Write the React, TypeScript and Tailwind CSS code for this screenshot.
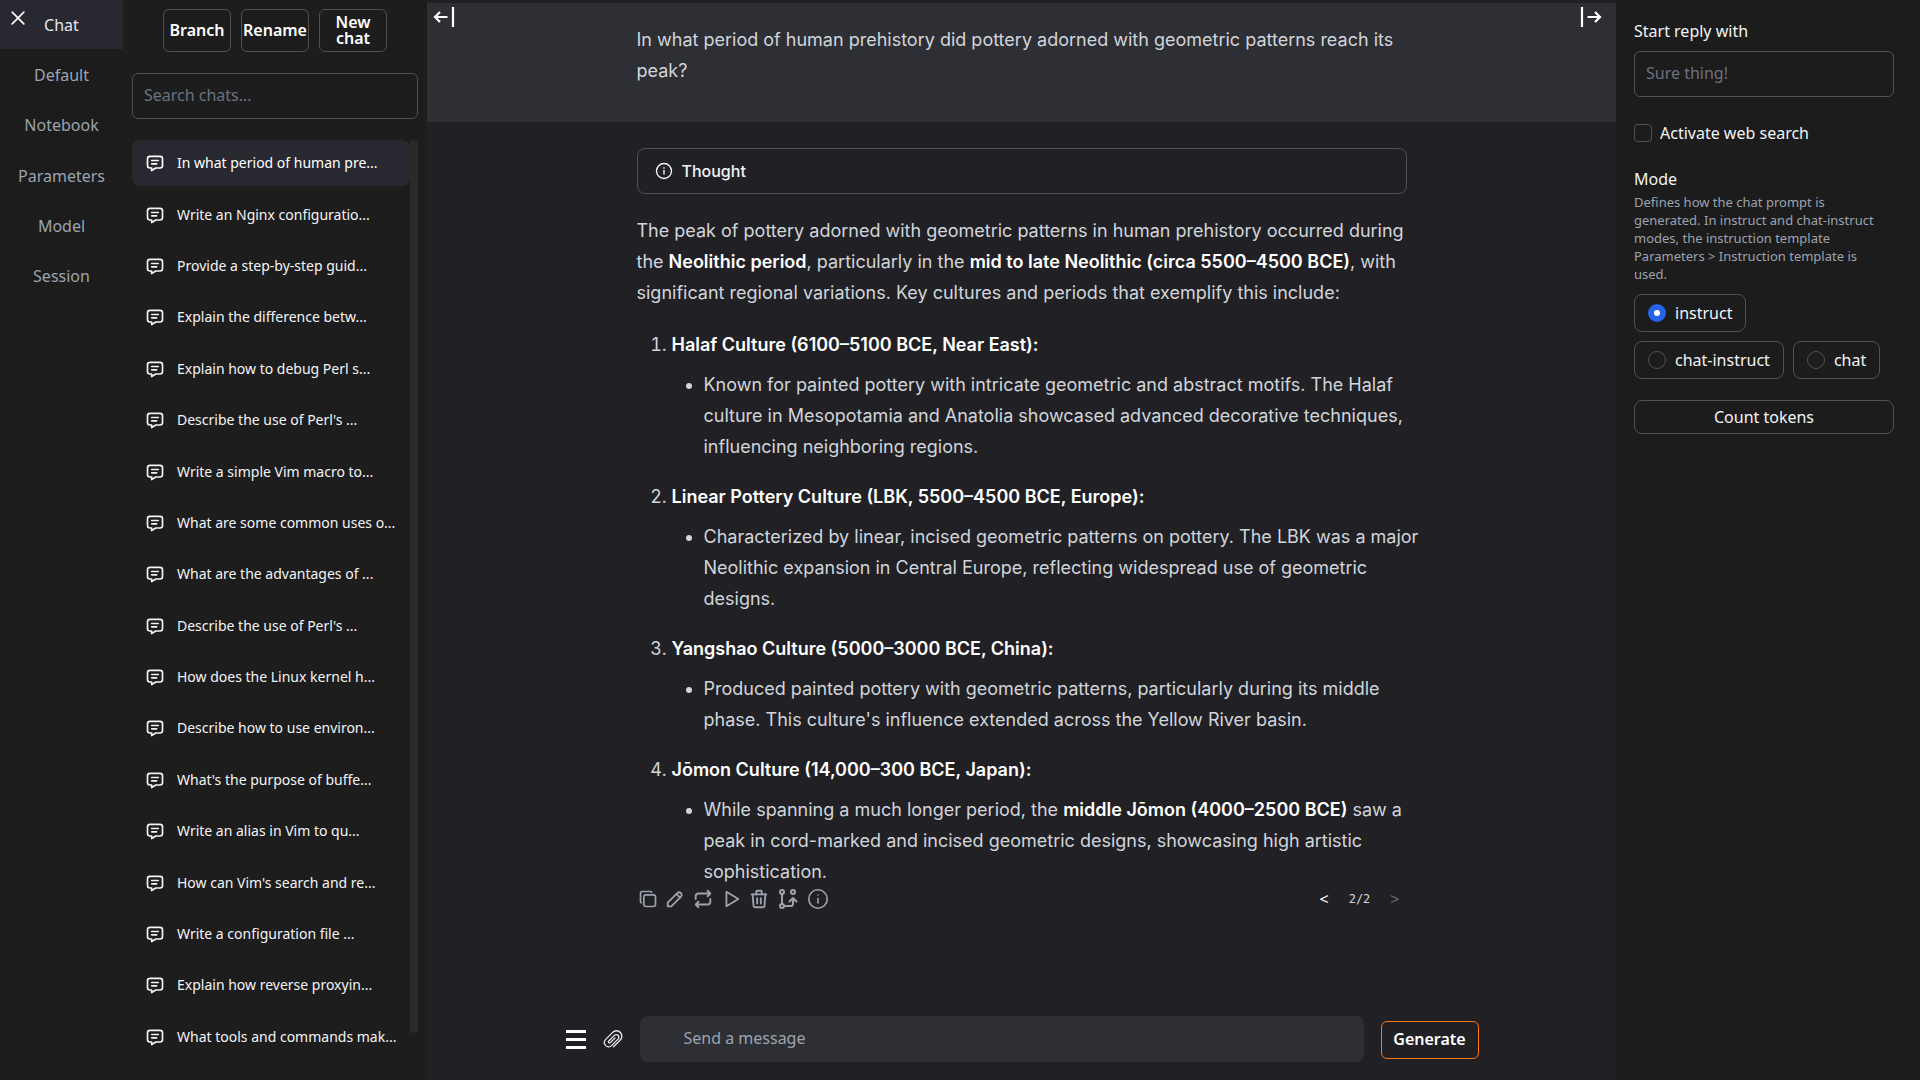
import type { ReactNode } from "react";

const tabs = ["Chat", "Default", "Notebook", "Parameters", "Model", "Session"];

const chats = [
  "In what period of human pre...",
  "Write an Nginx configuratio...",
  "Provide a step-by-step guid...",
  "Explain the difference betw...",
  "Explain how to debug Perl s...",
  "Describe the use of Perl's ...",
  "Write a simple Vim macro to...",
  "What are some common uses o...",
  "What are the advantages of ...",
  "Describe the use of Perl's ...",
  "How does the Linux kernel h...",
  "Describe how to use environ...",
  "What's the purpose of buffe...",
  "Write an alias in Vim to qu...",
  "How can Vim's search and re...",
  "Write a configuration file ...",
  "Explain how reverse proxyin...",
  "What tools and commands mak...",
];

const cultures: { title: string; body: ReactNode }[] = [
  {
    title: "Halaf Culture (6100–5100 BCE, Near East):",
    body: "Known for painted pottery with intricate geometric and abstract motifs. The Halaf culture in Mesopotamia and Anatolia showcased advanced decorative techniques, influencing neighboring regions.",
  },
  {
    title: "Linear Pottery Culture (LBK, 5500–4500 BCE, Europe):",
    body: "Characterized by linear, incised geometric patterns on pottery. The LBK was a major Neolithic expansion in Central Europe, reflecting widespread use of geometric designs.",
  },
  {
    title: "Yangshao Culture (5000–3000 BCE, China):",
    body: "Produced painted pottery with geometric patterns, particularly during its middle phase. This culture's influence extended across the Yellow River basin.",
  },
  {
    title: "Jōmon Culture (14,000–300 BCE, Japan):",
    body: (
      <>
        While spanning a much longer period, the{" "}
        <strong className="font-semibold text-white">middle Jōmon (4000–2500 BCE)</strong> saw a peak in
        cord-marked and incised geometric designs, showcasing high artistic sophistication.
      </>
    ),
  },
];

function Icon({ className, children }: { className: string; children: ReactNode }) {
  return (
    <svg
      viewBox="0 0 24 24"
      className={className}
      fill="none"
      stroke="currentColor"
      strokeWidth="2"
      strokeLinecap="round"
      strokeLinejoin="round"
      aria-hidden="true"
    >
      {children}
    </svg>
  );
}

const actions: { name: string; size: string; shape: ReactNode }[] = [
  {
    name: "Copy",
    size: "size-5",
    shape: (
      <>
        <path d="M7 9.667A2.667 2.667 0 0 1 9.667 7h8.666A2.667 2.667 0 0 1 21 9.667v8.666A2.667 2.667 0 0 1 18.333 21H9.667A2.667 2.667 0 0 1 7 18.333z" />
        <path d="M4.012 16.737A2 2 0 0 1 3 15V5c0-1.1.9-2 2-2h10c.75 0 1.158.385 1.5 1" />
      </>
    ),
  },
  {
    name: "Edit",
    size: "size-[22px]",
    shape: (
      <>
        <path d="M4 20h4L18.500 9.500a2.828 2.828 0 1 0-4-4L4 16v4" />
        <path d="M13.500 6.500l4 4" />
      </>
    ),
  },
  {
    name: "Regenerate",
    size: "size-[22px]",
    shape: (
      <>
        <path d="M4 12V9a3 3 0 0 1 3-3h13m-3-3 3 3-3 3" />
        <path d="M20 12v3a3 3 0 0 1-3 3H4m3 3-3-3 3-3" />
      </>
    ),
  },
  { name: "Continue", size: "size-[22px]", shape: <path d="M7 4v16l13-8z" /> },
  {
    name: "Remove",
    size: "size-[22px]",
    shape: (
      <>
        <path d="M4 7h16M10 11v6M14 11v6" />
        <path d="m5 7 1 12a2 2 0 0 0 2 2h8a2 2 0 0 0 2-2l1-12" />
        <path d="M9 7V4a1 1 0 0 1 1-1h4a1 1 0 0 1 1 1v3" />
      </>
    ),
  },
  {
    name: "Branch",
    size: "size-6",
    shape: (
      <>
        <circle cx="6" cy="5" r="2" />
        <circle cx="6" cy="19" r="2" />
        <circle cx="17" cy="5" r="2" />
        <path d="M6 7v10M8 19h7a2 2 0 0 0 2-2v-5" />
        <path d="m13.500 14.500 3.500-3.500 3.500 3.500" />
      </>
    ),
  },
  {
    name: "Info",
    size: "size-6",
    shape: (
      <g strokeWidth="1.6">
        <circle cx="12" cy="12" r="9.200" />
        <path d="M12 8h.01M12 11.500v4.500" />
      </g>
    ),
  },
];

const modes = ["instruct", "chat-instruct", "chat"];

function TabBar() {
  return (
    <nav className="w-[123px] shrink-0 bg-[#1c1c1c]">
      <div role="tablist" className="grid h-[301px] grid-rows-6 gap-px">
        {tabs.map((tab, i) => (
          <button
            key={tab}
            role="tab"
            aria-selected={i === 0}
            className={i === 0 ? "bg-[#282930] text-[#e5e7eb]" : "text-[#9ca3af]"}
          >
            {tab}
          </button>
        ))}
      </div>
    </nav>
  );
}

function HistorySidebar() {
  return (
    <aside className="flex w-[304px] shrink-0 flex-col bg-[#1d1d1d] pt-[9px] pr-[9px] pb-5 pl-[9px]">
      <div className="flex justify-center gap-[10px]">
        {["Branch", "Rename", "New chat"].map((label) => (
          <button
            key={label}
            className="h-[43px] w-[68px] rounded-md border border-[#515151] pb-[2px] text-base leading-4 font-semibold text-white"
          >
            {label}
          </button>
        ))}
      </div>
      <input
        type="text"
        aria-label="Search chats"
        placeholder="Search chats..."
        className="mt-[21px] h-[46px] w-full rounded-md border border-[#515151] bg-transparent px-[11px] pb-[2px] text-white placeholder:text-[#6b7280]"
      />
      <div className="mt-[21px] flex flex-1">
        <ul className="flex flex-1 flex-col gap-[5px]">
          {chats.map((chat, i) => (
            <li key={i} className="flex flex-1">
              <button
                className={
                  i === 0
                    ? "flex flex-1 items-center gap-3 rounded-lg bg-[#282930] pl-[13px] text-sm text-white"
                    : "flex flex-1 items-center gap-3 rounded-lg pl-[13px] text-sm text-[#f3f4f6]"
                }
              >
                <Icon className="size-5">
                  <path d="M8 9h8M8 13h6" />
                  <path d="M18 4a3 3 0 0 1 3 3v8a3 3 0 0 1-3 3h-5l-5 3v-3H6a3 3 0 0 1-3-3V7a3 3 0 0 1 3-3z" />
                </Icon>
                <span>{chat}</span>
              </button>
            </li>
          ))}
        </ul>
        <div className="mb-[27px] w-2 rounded-full bg-[#2a2a2a]" />
      </div>
    </aside>
  );
}

function Conversation() {
  return (
    <div className="font-['Inter',sans-serif] text-lg leading-[31px] text-[#d1d5db]">
      <div className="mt-[3px] bg-[#2e2f34] pt-[21px] pb-9">
        <p className="mx-auto max-w-[770px]">
          In what period of human prehistory did pottery adorned with geometric patterns reach its peak?
        </p>
      </div>
      <div className="mx-auto mt-[26px] max-w-[770px]">
        <button className="flex h-[46px] w-full items-center gap-[9px] rounded-lg border border-[#515151] px-[17px] text-base font-medium text-[#f3f4f6]">
          <svg viewBox="0 0 18 18" className="size-[18px]" fill="none" stroke="currentColor" aria-hidden="true">
            <circle cx="9" cy="9" r="7.500" strokeWidth="1.400" />
            <path d="M9 8v4.500M9 5.200v1.500" strokeWidth="1.400" />
          </svg>
          Thought
        </button>
        <p className="mt-[21px]">
          The peak of pottery adorned with geometric patterns in human prehistory occurred during the{" "}
          <strong className="font-semibold text-white">Neolithic period</strong>, particularly in the{" "}
          <strong className="font-semibold text-white">mid to late Neolithic (circa 5500–4500 BCE)</strong>, with
          significant regional variations. Key cultures and periods that exemplify this include:
        </p>
        <ol className="mt-[21px] -mr-4 flex list-decimal flex-col gap-[19px] pl-[35px]">
          {cultures.map((c) => (
            <li key={c.title}>
              <p className="font-semibold text-white">{c.title}</p>
              <ul className="mt-[9px] list-disc pl-8">
                <li>{c.body}</li>
              </ul>
            </li>
          ))}
        </ol>
        <div className="flex items-center justify-between text-[#9ca3af]">
          <div className="flex h-6 items-center gap-[6px] pl-px">
            {actions.map((a) => (
              <button key={a.name} aria-label={a.name}>
                <Icon className={a.size}>{a.shape}</Icon>
              </button>
            ))}
          </div>
          <div className="flex items-center gap-5 pr-[7px] font-['Noto_Sans',sans-serif] text-base leading-6">
            <button aria-label="Previous version" className="text-white">
              &lt;
            </button>
            <span className="font-['DejaVu_Sans_Mono',monospace] text-xs leading-6 text-[#d1d5db]">2/2</span>
            <button aria-label="Next version" disabled className="text-[#6b6c70]">
              &gt;
            </button>
          </div>
        </div>
      </div>
    </div>
  );
}

function Composer() {
  return (
    <form className="mx-auto mb-[18px] flex w-full max-w-[914px] items-center pl-px">
      <button type="button" aria-label="Menu" className="flex w-5 flex-col gap-[5px]">
        <span className="h-[3px] w-5 bg-white" />
        <span className="h-[3px] w-5 bg-white" />
        <span className="h-[3px] w-5 bg-white" />
      </button>
      <button type="button" aria-label="Attach file" className="ml-[17px] text-[#e5e7eb]">
        <svg viewBox="0 0 20 20" className="size-5" fill="none" stroke="currentColor" strokeWidth="1.300" strokeLinecap="round" aria-hidden="true">
          <path d="M10.500 17.800 16.600 11.700C18.800 9.500 19.600 6.200 17.400 3.500 15.200 1 11.700 1.300 9.400 3.600L2.900 10.100C1 12 .8 14.500 2.500 16.400c1.800 1.900 4.500 1.800 6.300 0l6-6c1.200-1.200 1.300-2.800.3-3.900-1.100-1.200-2.800-1-3.900.1L6 11.800c-.6.600-.7 1.300-.2 1.800s1.200.4 1.800-.2l4.400-4.400" />
        </svg>
      </button>
      <input
        type="text"
        aria-label="Message"
        placeholder="Send a message"
        className="ml-[17px] h-[46px] flex-1 rounded-lg bg-[#2e2f34] px-11 pb-[2px] text-white placeholder:text-[#9ca3af]"
      />
      <button
        type="submit"
        className="mt-[2px] ml-[17px] h-[38px] w-[98px] rounded-md border border-[#ff7518] pb-[2px] font-semibold text-white"
      >
        Generate
      </button>
    </form>
  );
}

function SettingsPanel() {
  return (
    <aside className="flex w-[304px] shrink-0 flex-col bg-[#1c1c1c] pt-[19px] pr-[26px] pl-[18px] text-[#f3f4f6]">
      <label htmlFor="start-reply">Start reply with</label>
      <input
        id="start-reply"
        type="text"
        placeholder="Sure thing!"
        className="mt-2 h-[46px] rounded-md border border-[#515151] bg-transparent px-[11px] pb-[2px] placeholder:text-[#6b7280]"
      />
      <label className="mt-6 flex items-center gap-2">
        <input type="checkbox" className="size-[18px] appearance-none rounded border border-[#515151]" />
        Activate web search
      </label>
      <fieldset className="mt-[22px]">
        <legend>Mode</legend>
        <p className="mt-[2px] pr-2 text-[13px] leading-[18px] text-[#9ca3af]">
          Defines how the chat prompt is generated. In instruct and chat-instruct modes, the instruction template
          Parameters &gt; Instruction template is used.
        </p>
        <div className="mt-[11px] flex flex-wrap gap-[9px]">
          {modes.map((mode) => (
            <label key={mode} className="flex h-[38px] items-center gap-[9px] rounded-lg border border-[#515151] px-[13px]">
              <input
                type="radio"
                name="mode"
                value={mode}
                defaultChecked={mode === "instruct"}
                className="size-[18px] appearance-none rounded-full border border-[#515151] checked:border-[6px] checked:border-[#2563eb] checked:bg-white"
              />
              {mode}
            </label>
          ))}
        </div>
      </fieldset>
      <button className="mt-[21px] h-[34px] rounded-lg border border-[#515151]">Count tokens</button>
    </aside>
  );
}

export default function App() {
  return (
    <div className="relative flex min-h-screen bg-[#212125] font-['Noto_Sans',sans-serif] text-base">
      <button aria-label="Close tabs" className="absolute top-2 left-2 text-white">
        <Icon className="size-5">
          <path d="M5 5l14 14M19 5L5 19" />
        </Icon>
      </button>
      <TabBar />
      <HistorySidebar />
      <main className="relative flex flex-1 flex-col justify-between">
        <button aria-label="Hide history" className="absolute top-[7px] left-[6px] text-white">
          <svg viewBox="0 0 22 20" className="h-5 w-[22px]" fill="none" stroke="currentColor" strokeWidth="2.2" aria-hidden="true">
            <path d="M14.500 10H2M7 5l-5 5 5 5M20 0v20" />
          </svg>
        </button>
        <button aria-label="Hide settings" className="absolute top-[7px] right-[14px] text-white">
          <svg viewBox="0 0 22 20" className="h-5 w-[22px]" fill="none" stroke="currentColor" strokeWidth="2.2" aria-hidden="true">
            <path d="M7.500 10H20M15 5l5 5-5 5M2 0v20" />
          </svg>
        </button>
        <Conversation />
        <Composer />
      </main>
      <SettingsPanel />
    </div>
  );
}
